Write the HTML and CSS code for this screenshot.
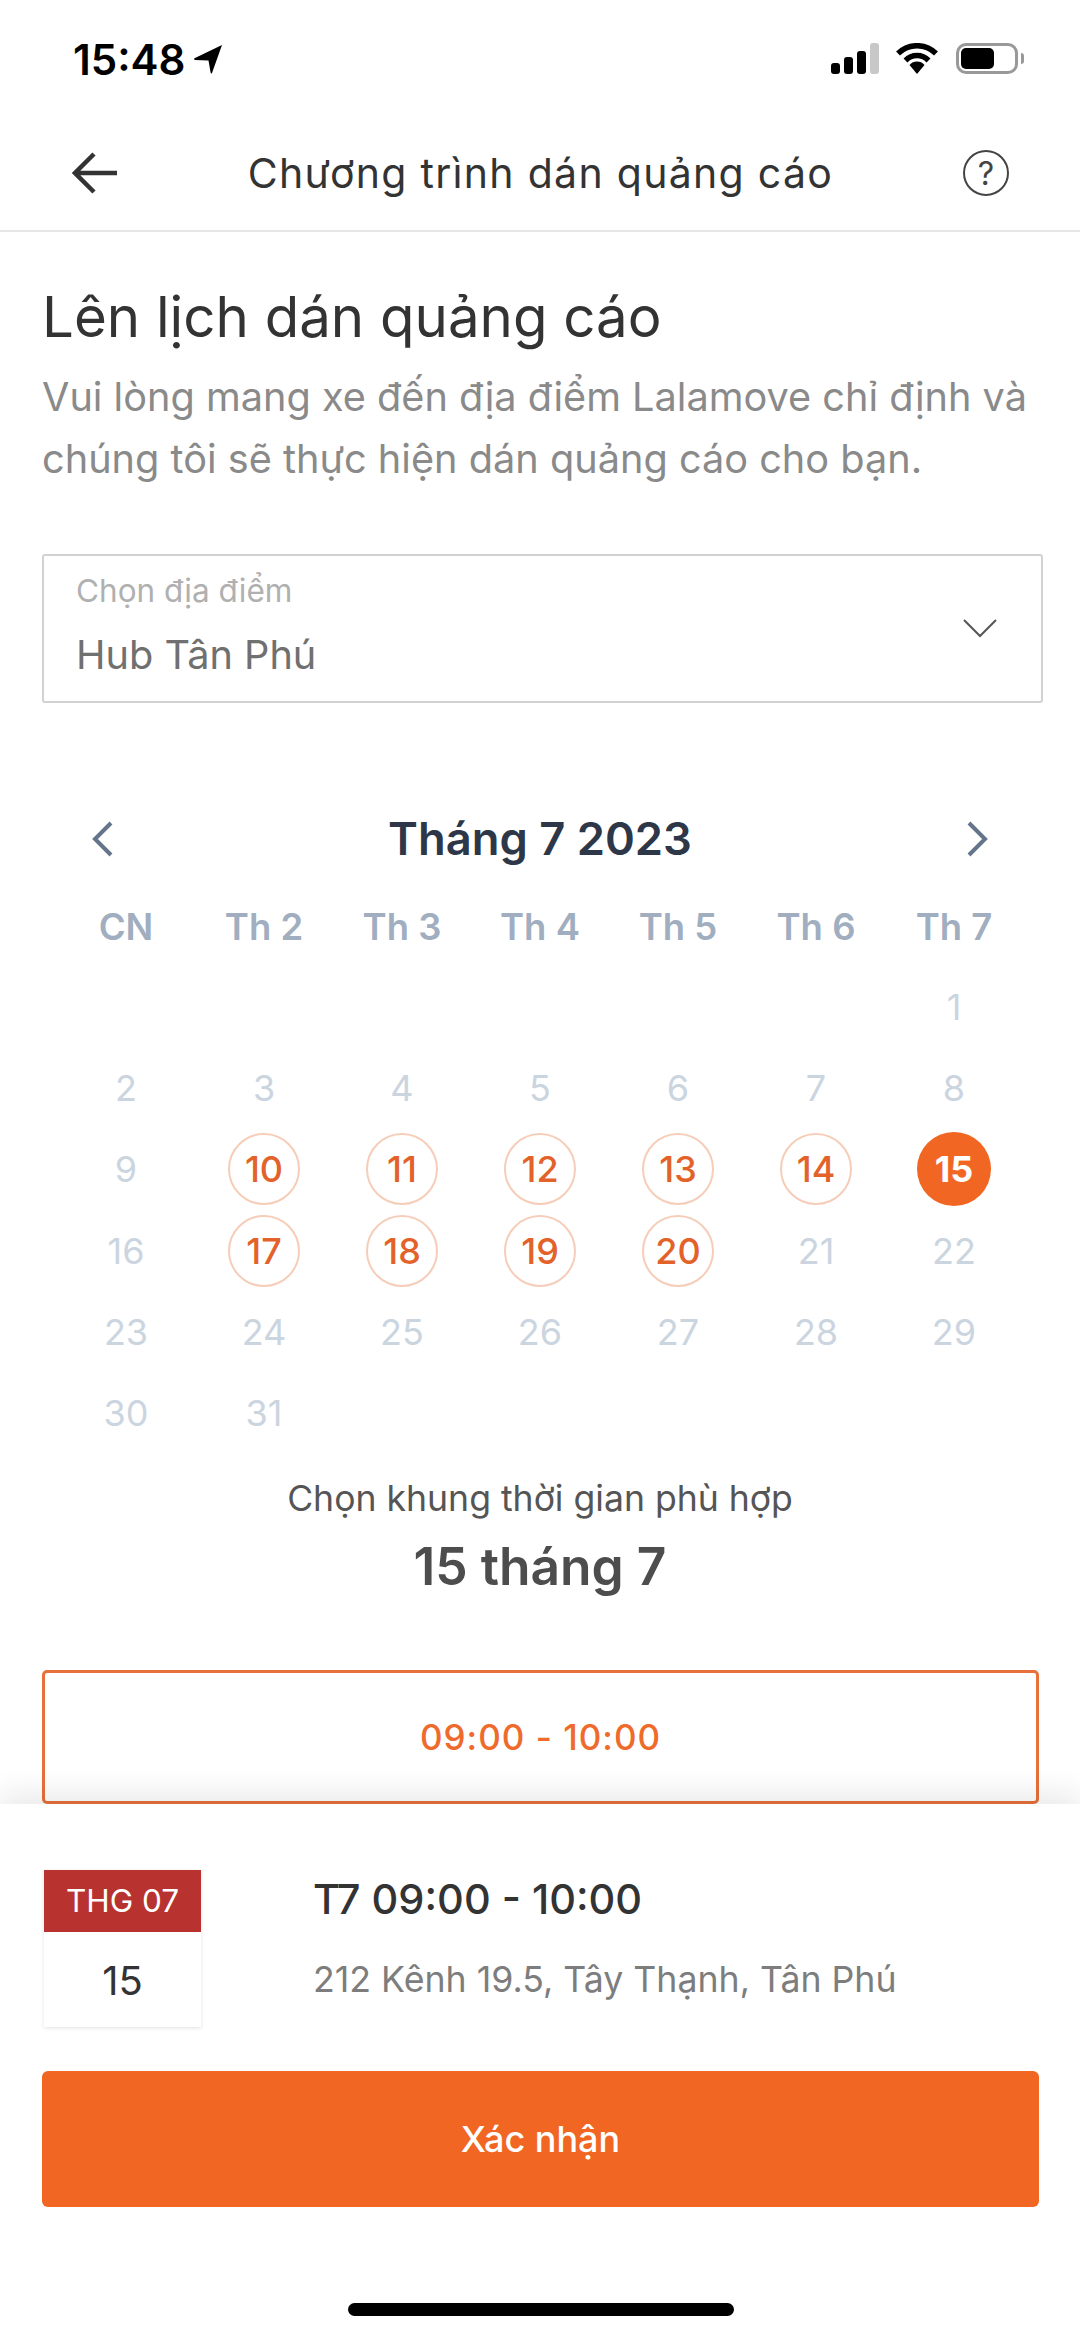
FILE: index.html
```html
<!DOCTYPE html>
<html>

<head>
    <title>Chương trình dán quảng cáo</title>
    <link rel="stylesheet" href="styles.css">
</head>

<body>
    <div class="page">
        <div class="status-bar">
            <div class="status-time">
                <span>15:48</span>
                <svg class="status-arrow" width="28" height="29" viewBox="0 0 28 29">
                    <path d="M28 0 L18 28 Q17 29.500 16.500 27 L14.500 15.500 L1 15 Q-1 14 1 13 Z" fill="#000"/>
                </svg>
            </div>
            <div class="status-icons">
                <div class="signal">
                    <span class="bar bar-1"></span>
                    <span class="bar bar-2"></span>
                    <span class="bar bar-3"></span>
                    <span class="bar bar-4"></span>
                </div>
                <svg class="wifi" width="42" height="31" viewBox="0 0 42 31">
                    <path d="M2 10.500 A27 27 0 0 1 40 10.500" fill="none" stroke="#000" stroke-width="5.500"/>
                    <path d="M9.500 17.500 A16 16 0 0 1 32.500 17.500" fill="none" stroke="#000" stroke-width="5.500"/>
                    <path d="M13.500 22 A10 10 0 0 1 28.500 22 L21 31 Z" fill="#000"/>
                </svg>
                <div class="battery">
                    <div class="battery-body"><div class="battery-fill"></div></div>
                    <div class="battery-cap"></div>
                </div>
            </div>
        </div>

        <div class="nav-bar">
            <svg class="nav-back" width="46" height="42" viewBox="0 0 46 42">
                <path d="M45 21 H3 M22 2 L3 21 L22 40" fill="none" stroke="#333" stroke-width="4.500"/>
            </svg>
            <div class="nav-title">Chương trình dán quảng cáo</div>
            <div class="nav-help">?</div>
        </div>

        <div class="content">
            <h1 class="page-heading">Lên lịch dán quảng cáo</h1>
            <p class="page-desc">Vui lòng mang xe đến địa điểm Lalamove chỉ định và chúng tôi sẽ thực hiện dán quảng cáo cho bạn.</p>

            <div class="select-box">
                <div>
                    <div class="select-label">Chọn địa điểm</div>
                    <div class="select-value">Hub Tân Phú</div>
                </div>
                <svg class="select-chevron" width="34" height="19" viewBox="0 0 34 19">
                    <path d="M1 1 L17 17 L33 1" fill="none" stroke="#555" stroke-width="2"/>
                </svg>
            </div>

            <div class="cal-header">
                <svg width="22" height="36" viewBox="0 0 22 36">
                    <path d="M20 2 L4 18 L20 34" fill="none" stroke="#64748b" stroke-width="4"/>
                </svg>
                <div class="cal-title">Tháng 7 2023</div>
                <svg width="22" height="36" viewBox="0 0 22 36">
                    <path d="M2 2 L18 18 L2 34" fill="none" stroke="#64748b" stroke-width="4"/>
                </svg>
            </div>

            <div class="cal-weekdays">
                <div>CN</div><div>Th 2</div><div>Th 3</div><div>Th 4</div><div>Th 5</div><div>Th 6</div><div>Th 7</div>
            </div>

            <div class="cal-days">
                <div class="day"></div><div class="day"></div><div class="day"></div><div class="day"></div><div class="day"></div><div class="day"></div>
                <div class="day"><span>1</span></div>
                <div class="day"><span>2</span></div>
                <div class="day"><span>3</span></div>
                <div class="day"><span>4</span></div>
                <div class="day"><span>5</span></div>
                <div class="day"><span>6</span></div>
                <div class="day"><span>7</span></div>
                <div class="day"><span>8</span></div>
                <div class="day"><span>9</span></div>
                <div class="day open"><span>10</span></div>
                <div class="day open"><span>11</span></div>
                <div class="day open"><span>12</span></div>
                <div class="day open"><span>13</span></div>
                <div class="day open"><span>14</span></div>
                <div class="day active"><span>15</span></div>
                <div class="day"><span>16</span></div>
                <div class="day open"><span>17</span></div>
                <div class="day open"><span>18</span></div>
                <div class="day open"><span>19</span></div>
                <div class="day open"><span>20</span></div>
                <div class="day"><span>21</span></div>
                <div class="day"><span>22</span></div>
                <div class="day"><span>23</span></div>
                <div class="day"><span>24</span></div>
                <div class="day"><span>25</span></div>
                <div class="day"><span>26</span></div>
                <div class="day"><span>27</span></div>
                <div class="day"><span>28</span></div>
                <div class="day"><span>29</span></div>
                <div class="day"><span>30</span></div>
                <div class="day"><span>31</span></div>
            </div>

            <div class="slot-hint">Chọn khung thời gian phù hợp</div>
            <div class="slot-date">15 tháng 7</div>
            <div class="slot-box">09:00 - 10:00</div>
        </div>

        <div class="sheet">
            <div class="summary">
                <div class="date-card">
                    <div class="date-month">THG 07</div>
                    <div class="date-day">15</div>
                </div>
                <div class="summary-info">
                    <div class="summary-time">T7 09:00 - 10:00</div>
                    <div class="summary-address">212 Kênh 19.5, Tây Thạnh, Tân Phú</div>
                </div>
            </div>
            <div class="confirm-btn">Xác nhận</div>
            <div class="home-bar"></div>
        </div>
    </div>
</body>

</html>
```

FILE: styles.css
```css
body {
    margin: 0;
    background-color: #fff;
    font-family: "Inter", "Noto Sans", sans-serif;
    color: #333;
}

.page {
    width: 1080px;
    height: 2337px;
    display: flex;
    flex-direction: column;
    overflow: hidden;
}

.status-bar {
    height: 100px;
    padding: 42px 56px 0 73px;
    box-sizing: border-box;
    display: flex;
    justify-content: space-between;
    align-items: flex-start;
}

.status-time {
    display: flex;
    align-items: flex-start;
    gap: 9px;
    font-size: 42px;
    line-height: 36px;
    font-weight: 600;
    color: #000;
}

.status-arrow {
    margin-top: 3px;
}

.status-icons {
    display: flex;
    align-items: flex-start;
    margin-top: 1px;
}

.signal {
    display: flex;
    align-items: flex-end;
    gap: 4px;
    height: 31px;
    margin-right: 17px;
}

.bar {
    width: 9px;
    border-radius: 3px;
    background-color: #000;
}

.bar-1 { height: 11px; }
.bar-2 { height: 17px; }
.bar-3 { height: 23px; }
.bar-4 { height: 31px; background-color: #c8c8c8; }

.wifi {
    margin-right: 18px;
}

.battery {
    display: flex;
    align-items: center;
    gap: 3px;
}

.battery-body {
    width: 62px;
    height: 31px;
    box-sizing: border-box;
    border: 3px solid #999;
    border-radius: 10px;
    padding: 2px;
}

.battery-fill {
    width: 33px;
    height: 100%;
    background-color: #000;
    border-radius: 5px;
}

.battery-cap {
    width: 3px;
    height: 11px;
    background-color: #999;
    border-radius: 0 3px 3px 0;
}

.nav-bar {
    height: 132px;
    box-sizing: border-box;
    border-bottom: 2px solid #e6e6e6;
    padding: 16px 71px 0 72px;
    display: flex;
    justify-content: space-between;
    align-items: center;
}

.nav-title {
    font-size: 41px;
    letter-spacing: 1.3px;
    color: #333;
}

.nav-help {
    width: 46px;
    height: 46px;
    box-sizing: border-box;
    border: 2.5px solid #444;
    border-radius: 50%;
    display: flex;
    justify-content: center;
    align-items: center;
    font-size: 32px;
    color: #444;
}

.content {
    flex: 1;
    padding: 50px 42px 0;
}

.page-heading {
    margin: 0;
    font-size: 56.4px;
    line-height: 70px;
    font-weight: 400;
    color: #333;
}

.page-desc {
    margin: 14px 0 0;
    font-size: 39.7px;
    line-height: 62px;
    color: #8a8a8a;
}

.select-box {
    margin-top: 64px;
    width: 1001px;
    height: 149px;
    box-sizing: border-box;
    border: 2px solid #d2d2d2;
    border-radius: 3px;
    padding: 17px 26px 0 32px;
    display: flex;
    justify-content: space-between;
    align-items: flex-start;
}

.select-label {
    font-size: 31.5px;
    line-height: 36px;
    color: #b0b0b0;
}

.select-value {
    margin-top: 23px;
    font-size: 39.7px;
    line-height: 46px;
    color: #707070;
}

.select-chevron {
    margin-top: 46px;
    margin-right: 18px;
}

.cal-header {
    margin-top: 108px;
    padding: 0 49px;
    display: flex;
    justify-content: space-between;
    align-items: center;
}

.cal-title {
    font-size: 45.3px;
    line-height: 56px;
    font-weight: 600;
    color: #2d3748;
}

.cal-weekdays,
.cal-days {
    display: grid;
    grid-template-columns: repeat(7, 138px);
    padding-left: 15px;
    text-align: center;
}

.cal-weekdays {
    margin-top: 40px;
    font-size: 36.5px;
    line-height: 40px;
    font-weight: 600;
    color: #a0aec0;
}

.cal-days {
    margin-top: 19px;
    grid-auto-rows: 81.3px;
    font-size: 36px;
    color: #cbd5e0;
}

.day {
    display: flex;
    justify-content: center;
    align-items: center;
}

.day span {
    width: 72px;
    height: 72px;
    box-sizing: border-box;
    border-radius: 50%;
    display: flex;
    justify-content: center;
    align-items: center;
}

.day.open span {
    border: 2px solid #f6cdb8;
    color: #e2622a;
    font-weight: 500;
}

.day.active span {
    width: 74px;
    height: 74px;
    background-color: #f16622;
    color: #fff;
    font-weight: 700;
}

.slot-hint {
    margin-top: 23px;
    font-size: 35.6px;
    line-height: 44px;
    text-align: center;
    color: #555;
}

.slot-date {
    margin-top: 15px;
    font-size: 51.5px;
    line-height: 60px;
    font-weight: 600;
    text-align: center;
    color: #4d4d4d;
}

.slot-box {
    margin-top: 74px;
    width: 997px;
    height: 134px;
    box-sizing: border-box;
    border: 3px solid #e8703a;
    border-radius: 5px;
    display: flex;
    justify-content: center;
    align-items: center;
    font-size: 35px;
    font-weight: 500;
    letter-spacing: 1px;
    color: #ee6b2c;
}

.sheet {
    position: relative;
    height: 533px;
    box-sizing: border-box;
    padding: 66px 41px 0 42px;
    background-color: #fff;
    box-shadow: 0 -10px 30px rgba(0, 0, 0, 0.09);
}

.summary {
    display: flex;
    gap: 112px;
    padding-left: 2px;
}

.date-card {
    width: 157px;
    height: 157px;
    box-sizing: border-box;
    box-shadow: 0 1px 4px rgba(0, 0, 0, 0.12);
    text-align: center;
}

.date-month {
    height: 62px;
    background-color: #b83230;
    color: #fff;
    font-size: 31.5px;
    line-height: 62px;
}

.date-day {
    font-size: 40px;
    line-height: 97px;
    color: #333;
}

.summary-info {
    padding-top: 5px;
}

.summary-time {
    font-size: 41.5px;
    line-height: 48px;
    font-weight: 500;
    color: #333;
}

.summary-address {
    margin-top: 34px;
    font-size: 35.7px;
    line-height: 44px;
    color: #7d7d7d;
}

.confirm-btn {
    margin-top: 44px;
    height: 136px;
    border-radius: 6px;
    background-color: #f16622;
    color: #fff;
    font-size: 36px;
    font-weight: 500;
    display: flex;
    justify-content: center;
    align-items: center;
}

.home-bar {
    margin: 96px auto 0;
    width: 386px;
    height: 13px;
    border-radius: 7px;
    background-color: #000;
}
```
